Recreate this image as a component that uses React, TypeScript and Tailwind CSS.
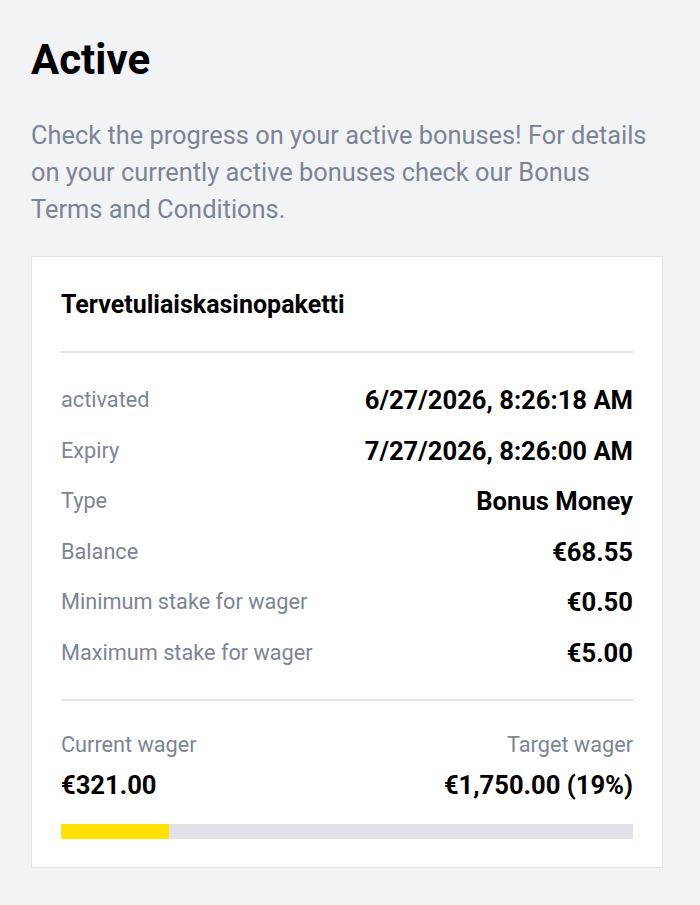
import React from 'react';

const rows: { label: string; value: string }[] = [
  { label: 'activated', value: '6/27/2026, 8:26:18 AM' },
  { label: 'Expiry', value: '7/27/2026, 8:26:00 AM' },
  { label: 'Type', value: 'Bonus Money' },
  { label: 'Balance', value: '€68.55' },
  { label: 'Minimum stake for wager', value: '€0.50' },
  { label: 'Maximum stake for wager', value: '€5.00' },
];

const App: React.FC = () => {
  return (
    <div
      className="min-h-screen bg-[#f2f3f5] pl-[31px] pr-[37px] pt-[34px] pb-9"
      style={{ fontFamily: 'Roboto, "Liberation Sans", sans-serif' }}
    >
      <h1 className="text-[42px] font-bold leading-[52px] text-black">Active</h1>

      <p className="mt-[31px] pr-[8px] text-[25.4px] leading-[37px] text-[#7b8595]">
        Check the progress on your active bonuses! For details on your currently active bonuses check our Bonus
        Terms and Conditions.
      </p>

      <div className="mt-[28px] border border-[#e0e3e8] bg-white px-[29px] pt-[30px] pb-[28px]">
        <h2 className="text-[25px] font-bold leading-[36px] text-black">Tervetuliaiskasinopaketti</h2>

        <div className="mt-[28px] border-t-2 border-[#e3e5ea]" />

        <div className="pt-[22px] pb-[20px]">
          {rows.map((r) => (
            <div key={r.label} className="flex h-[50.6px] items-center justify-between">
              <span className="text-[21.7px] text-[#7b8595]">{r.label}</span>
              <span className="text-[25.6px] font-bold text-black">{r.value}</span>
            </div>
          ))}
        </div>

        <div className="border-t-2 border-[#e3e5ea]" />

        <div className="mt-[29px] flex justify-between text-[21.7px] leading-[30px] text-[#7b8595]">
          <span>Current wager</span>
          <span>Target wager</span>
        </div>
        <div className="mt-[10px] flex justify-between text-[25.6px] font-bold leading-[30px] text-black">
          <span>€321.00</span>
          <span>€1,750.00 (19%)</span>
        </div>

        <div className="mt-[24px] h-[15px] w-full bg-[#dfe2e8]">
          <div className="h-full w-[18.8%] bg-[#ffe000]" />
        </div>
      </div>
    </div>
  );
};

export default App;
